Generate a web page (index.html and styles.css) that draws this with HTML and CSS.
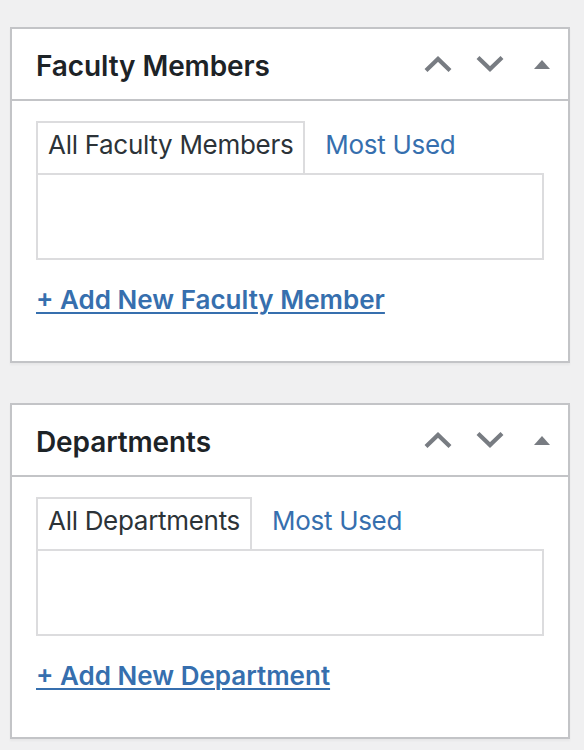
FILE: index.html
```html
<!DOCTYPE html>
<html lang="en">
<head>
<meta charset="utf-8">
<title>Meta boxes</title>
<link rel="stylesheet" href="styles.css">
</head>
<body>
<div class="postbox">
  <div class="postbox-header">
    <h2 class="hndle">Faculty Members</h2>
    <div class="handle-actions">
      <button class="handle-btn" type="button" aria-label="Move up">
        <svg width="28" height="16" viewBox="0 0 28 16"><polyline points="2,14.5 14,3 26,14.5" class="chev"/></svg>
      </button>
      <button class="handle-btn" type="button" aria-label="Move down">
        <svg width="28" height="16" viewBox="0 0 28 16"><polyline points="2,1.5 14,13 26,1.5" class="chev"/></svg>
      </button>
      <button class="handle-btn" type="button" aria-label="Toggle panel">
        <svg width="16" height="9" viewBox="0 0 16 9"><polygon points="0,9 8,0 16,9" class="tri"/></svg>
      </button>
    </div>
  </div>
  <div class="inside">
    <ul class="category-tabs">
      <li class="tab active">All Faculty Members</li>
      <li class="tab"><a href="#">Most Used</a></li>
    </ul>
    <div class="tabs-panel"></div>
    <a class="add-new" href="#">+ Add New Faculty Member</a>
  </div>
</div>

<div class="postbox">
  <div class="postbox-header">
    <h2 class="hndle">Departments</h2>
    <div class="handle-actions">
      <button class="handle-btn" type="button" aria-label="Move up">
        <svg width="28" height="16" viewBox="0 0 28 16"><polyline points="2,14.5 14,3 26,14.5" class="chev"/></svg>
      </button>
      <button class="handle-btn" type="button" aria-label="Move down">
        <svg width="28" height="16" viewBox="0 0 28 16"><polyline points="2,1.5 14,13 26,1.5" class="chev"/></svg>
      </button>
      <button class="handle-btn" type="button" aria-label="Toggle panel">
        <svg width="16" height="9" viewBox="0 0 16 9"><polygon points="0,9 8,0 16,9" class="tri"/></svg>
      </button>
    </div>
  </div>
  <div class="inside">
    <ul class="category-tabs">
      <li class="tab active">All Departments</li>
      <li class="tab"><a href="#">Most Used</a></li>
    </ul>
    <div class="tabs-panel"></div>
    <a class="add-new" href="#">+ Add New Department</a>
  </div>
</div>
</body>
</html>
```

FILE: styles.css
```css
* { box-sizing: border-box; }

html, body {
  margin: 0;
  background: #f0f0f1;
}

body {
  padding: 27px 14px 0 10px;
  font-family: Inter, "Liberation Sans", sans-serif;
  color: #1d2327;
}

.postbox {
  width: 560px;
  background: #fff;
  border: 2px solid #c3c4c7;
  box-shadow: 0 2px 2px rgba(0, 0, 0, 0.04);
  margin-bottom: 40px;
}

.postbox-header {
  display: flex;
  align-items: center;
  justify-content: space-between;
  height: 72px;
  border-bottom: 2px solid #c3c4c7;
  padding-left: 24px;
}

.hndle {
  margin: 0;
  font-size: 28px;
  font-weight: 600;
  line-height: 36px;
  letter-spacing: -0.1px;
  color: #1d2327;
  padding-top: 3px;
}

.handle-actions {
  display: flex;
  height: 100%;
  align-items: center;
}

.handle-btn {
  width: 52px;
  height: 100%;
  border: 0;
  background: none;
  padding: 0;
  display: flex;
  align-items: center;
  justify-content: center;
}

.handle-btn svg { display: block; }

.chev {
  fill: none;
  stroke: #787c82;
  stroke-width: 4.2;
  stroke-linejoin: miter;
  stroke-linecap: butt;
}

.tri { fill: #787c82; }

.inside {
  padding: 20px 24px 43px;
}

.category-tabs {
  list-style: none;
  margin: 0;
  padding: 0;
  display: flex;
  gap: 8px;
}

.tab {
  height: 52px;
  padding: 4px 10px 0;
  border: 2px solid transparent;
  border-bottom: 0;
  font-size: 26px;
  line-height: 36px;
  letter-spacing: -0.3px;
  color: #2c3338;
}

.tab.active {
  border-color: #dcdcde;
  background: #fff;
}

.tab a {
  color: #366fae;
  text-decoration: none;
}

.tabs-panel {
  height: 87px;
  border: 2px solid #dcdcde;
  background: #fff;
}

.add-new {
  display: inline-block;
  margin-top: 22px;
  font-size: 26px;
  font-weight: 600;
  line-height: 36px;
  color: #366fae;
  text-decoration: underline;
  text-decoration-thickness: 2px;
  text-underline-offset: 3px;
}
```
